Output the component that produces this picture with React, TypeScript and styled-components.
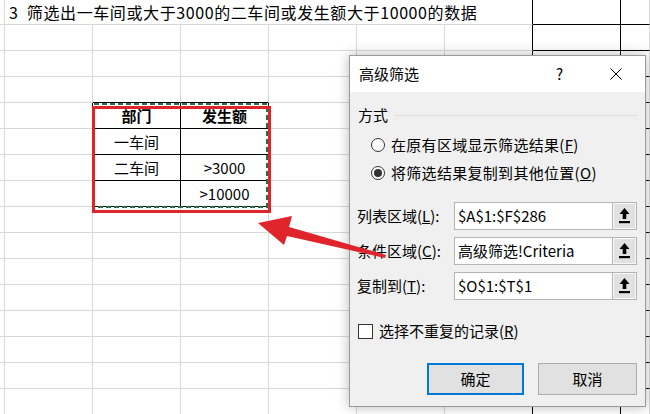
import React from 'react'
import styled, { createGlobalStyle } from 'styled-components'

const GlobalStyle = createGlobalStyle`
  html, body {
    margin: 0;
    padding: 0;
    background: #fff;
  }
  body {
    font-family: "Noto Sans CJK SC", "Microsoft YaHei", sans-serif;
  }
`

const LIGHT = '#d9d9d9'
const DARK = '#000'
const RED = '#e0242b'

const Page = styled.div`
  position: relative;
  width: 650px;
  height: 414px;
  overflow: hidden;
  background: #fff;
`

const Sheet = styled.div`
  display: grid;
  grid-template-columns: 5px repeat(7, 88px) 1fr;
  grid-template-rows: 25px repeat(15, 26px);
`

const Cell = styled.div<{ $right: string; $bottom: string; $bold?: boolean; $span?: number }>`
  box-sizing: border-box;
  grid-column: span ${({ $span }) => $span || 1};
  border-right: 1px solid ${({ $right }) => $right};
  border-bottom: 1px solid ${({ $bottom }) => $bottom};
  display: flex;
  align-items: center;
  justify-content: center;
  font-size: 15px;
  line-height: 20px;
  font-weight: ${({ $bold }) => ($bold ? 700 : 400)};
  color: #000;
  white-space: nowrap;
`

const TitleCell = styled(Cell)`
  justify-content: flex-start;
  padding-left: 4px;
  padding-bottom: 1px;
  font-size: 16px;
  letter-spacing: 0.6px;
  white-space: pre;
`

// the marching ants round the criteria range
const Marquee = styled.svg`
  position: absolute;
  left: 0;
  top: 0;
  pointer-events: none;
`

const Highlight = styled.div`
  position: absolute;
  left: 92px;
  top: 106px;
  width: 179px;
  height: 107px;
  box-sizing: border-box;
  border: 3px solid ${RED};
  pointer-events: none;
`

const Dialog = styled.div`
  position: absolute;
  left: 349px;
  top: 55px;
  width: 297px;
  height: 352px;
  box-sizing: border-box;
  border: 1px solid #9a9a9a;
  background: #f0f0f0;
  box-shadow: 0 0 12px rgba(0, 0, 0, 0.28);
  display: flex;
  flex-direction: column;
  font-size: 15px;
  line-height: 20px;
  color: #000;
`

const TitleBar = styled.div`
  height: 36px;
  background: #fff;
  display: flex;
  align-items: center;
  padding: 0 23px 0 9px;
`

const TitleText = styled.div`
  flex: 1;
`

const Help = styled.div`
  margin-right: 47px;
`

const Body = styled.div`
  display: flex;
  flex-direction: column;
  padding: 0 8px 11px 7px;
`

const GroupHeader = styled.div`
  margin-top: 13px;
  height: 20px;
  padding-left: 1px;
  display: flex;
  align-items: center;
  gap: 7px;
`

const GroupLine = styled.div`
  flex: 1;
  height: 1px;
  background: #dcdcdc;
`

const OptionRow = styled.label<{ $top: number }>`
  margin-top: ${({ $top }) => $top}px;
  margin-left: 14px;
  height: 20px;
  display: flex;
  align-items: center;
  gap: 6px;
  letter-spacing: 0.3px;
`

const RadioMark = styled.span<{ $checked?: boolean }>`
  width: 14px;
  height: 14px;
  box-sizing: border-box;
  border-radius: 50%;
  border: 1px solid #333;
  background: #fff;
  display: inline-flex;
  align-items: center;
  justify-content: center;

  &::after {
    content: '';
    width: 8px;
    height: 8px;
    border-radius: 50%;
    background: #333;
    display: ${({ $checked }) => ($checked ? 'block' : 'none')};
  }
`

const FieldRow = styled.div<{ $top: number }>`
  margin-top: ${({ $top }) => $top}px;
  height: 28px;
  display: flex;
  align-items: stretch;
`

const FieldLabel = styled.div`
  width: 97px;
  display: flex;
  align-items: center;
`

const FieldInput = styled.div`
  flex: 1;
  box-sizing: border-box;
  background: #fff;
  border: 1px solid #b4b4b4;
  border-right: none;
  padding-left: 3px;
  display: flex;
  align-items: center;
  white-space: nowrap;
`

const RefButton = styled.div`
  width: 25px;
  box-sizing: border-box;
  background: #e1e1e1;
  border: 1px solid #b4b4b4;
  box-shadow: inset 0 0 0 1px #f8f8f8;
  display: flex;
  align-items: center;
  justify-content: center;
`

const CheckRow = styled.label`
  margin-top: 21px;
  margin-left: 1px;
  height: 20px;
  display: flex;
  align-items: center;
  gap: 6px;
`

const CheckMark = styled.span`
  width: 15px;
  height: 15px;
  box-sizing: border-box;
  border: 1px solid #333;
  background: #fff;
`

const ButtonRow = styled.div`
  margin-top: 22px;
  display: flex;
  justify-content: flex-end;
  gap: 14px;
`

const DialogButton = styled.div<{ $primary?: boolean }>`
  width: ${({ $primary }) => ($primary ? 97 : 99)}px;
  height: 32px;
  box-sizing: border-box;
  background: #e1e1e1;
  border: ${({ $primary }) => ($primary ? '2px solid #0078d7' : '1px solid #adadad')};
  display: flex;
  align-items: center;
  justify-content: center;
`

const Overlay = styled.svg`
  position: absolute;
  left: 0;
  top: 0;
  z-index: 2;
  pointer-events: none;
`

const table: Record<number, string[]> = {
  4: ['部门', '发生额'],
  5: ['一车间', ''],
  6: ['二车间', '>3000'],
  7: ['', '>10000'],
}

function lines(r: number, c: number) {
  const inTable = r >= 4 && r <= 7 && (c === 2 || c === 3)
  const right = c === 6 || c === 7 || inTable || (c === 1 && r >= 4 && r <= 7) ? DARK : LIGHT
  const bottom = c >= 7 || inTable || (r === 3 && (c === 2 || c === 3)) ? DARK : LIGHT
  return { right, bottom }
}

const PickIcon = () => (
  <svg width="11" height="16" viewBox="0 0 11 16">
    <polygon points="5.5,0 10.5,6 7.3,6 7.3,11 3.7,11 3.7,6 0.5,6" fill="#000" />
    <rect x="0" y="13" width="11" height="2.2" fill="#000" />
  </svg>
)

const CloseIcon = () => (
  <svg width="12" height="12" viewBox="0 0 12 12">
    <path d="M0.5 0.5 L11.5 11.5 M11.5 0.5 L0.5 11.5" stroke="#000" strokeWidth="1" />
  </svg>
)

const fields = [
  { label: '列表区域', key: 'L', value: '$A$1:$F$286', top: 19 },
  { label: '条件区域', key: 'C', value: '高级筛选!Criteria', top: 7 },
  { label: '复制到', key: 'T', value: '$O$1:$T$1', top: 7 },
]

export default function App() {
  const cells: React.ReactNode[] = []

  // title row
  cells.push(<Cell key="t0" $right={LIGHT} $bottom={LIGHT} />)
  cells.push(
    <TitleCell key="t1" $span={6} $right={DARK} $bottom={LIGHT}>
      {'3  筛选出一车间或大于3000的二车间或发生额大于10000的数据'}
    </TitleCell>
  )
  cells.push(<Cell key="t7" $right={DARK} $bottom={DARK} />)
  cells.push(<Cell key="t8" $right={LIGHT} $bottom={DARK} />)

  for (let r = 1; r < 16; r++) {
    for (let c = 0; c < 9; c++) {
      const { right, bottom } = lines(r, c)
      const row = table[r]
      const text = row && (c === 2 || c === 3) ? row[c - 2] : ''
      cells.push(
        <Cell key={`${r}-${c}`} $right={right} $bottom={bottom} $bold={r === 4}>
          {text}
        </Cell>
      )
    }
  }

  return (
    <Page>
      <GlobalStyle />
      <Sheet>{cells}</Sheet>

      <Marquee width="650" height="414">
        <rect x="94" y="104" width="173" height="103" fill="none" stroke="#2b6b47" strokeWidth="2" strokeDasharray="5 3" />
      </Marquee>
      <Highlight />

      <Dialog>
        <TitleBar>
          <TitleText>高级筛选</TitleText>
          <Help>?</Help>
          <CloseIcon />
        </TitleBar>
        <Body>
          <GroupHeader>
            方式
            <GroupLine />
          </GroupHeader>
          <OptionRow $top={10}>
            <RadioMark />
            <span>
              在原有区域显示筛选结果(<u>F</u>)
            </span>
          </OptionRow>
          <OptionRow $top={8}>
            <RadioMark $checked />
            <span>
              将筛选结果复制到其他位置(<u>O</u>)
            </span>
          </OptionRow>

          {fields.map((f) => (
            <FieldRow key={f.key} $top={f.top}>
              <FieldLabel>
                {f.label}(<u>{f.key}</u>):
              </FieldLabel>
              <FieldInput>{f.value}</FieldInput>
              <RefButton>
                <PickIcon />
              </RefButton>
            </FieldRow>
          ))}

          <CheckRow>
            <CheckMark />
            <span>
              选择不重复的记录(<u>R</u>)
            </span>
          </CheckRow>

          <ButtonRow>
            <DialogButton $primary>确定</DialogButton>
            <DialogButton>取消</DialogButton>
          </ButtonRow>
        </Body>
      </Dialog>

      <Overlay width="650" height="414">
        <polygon
          points="258,223 292,216 289,227 386,255 385,258 287,236 284,245"
          fill={RED}
        />
      </Overlay>
    </Page>
  )
}
